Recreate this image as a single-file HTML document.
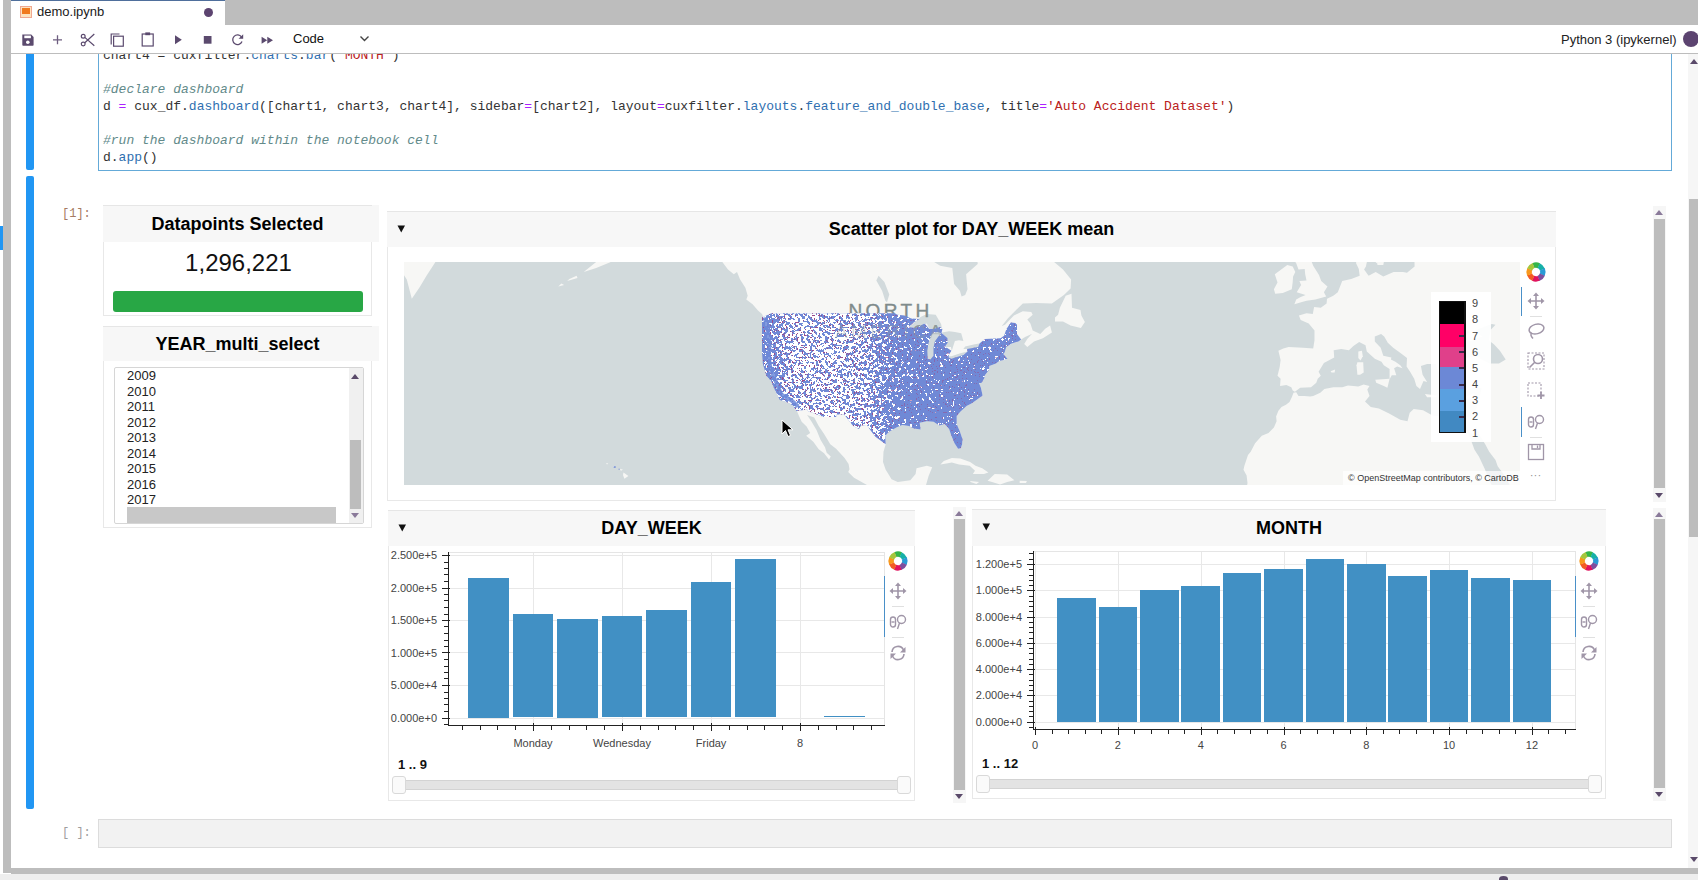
<!DOCTYPE html><html><head><meta charset="utf-8"><style>*{box-sizing:border-box;margin:0;padding:0}
html,body{width:1698px;height:880px;overflow:hidden;background:#fff;font-family:"Liberation Sans",sans-serif;color:#000}
.a{position:absolute}
.m{font-family:"Liberation Mono",monospace}
.pn{position:absolute;border:1px solid #e8e8e8;background:#fff}
.hd{position:absolute;background:#f7f7f7;box-shadow:inset 0 1px 0 #e6e6e6;font-weight:bold;font-size:18px;line-height:21px;text-align:center;color:#000;white-space:nowrap}
.t{position:absolute;white-space:pre}
.yl{position:absolute;font-size:11px;color:#444;text-align:right;width:60px;line-height:12px;white-space:nowrap}
.xl{position:absolute;font-size:11px;color:#444;text-align:center;width:80px;line-height:12px;white-space:nowrap}
.br{position:absolute;background:#4190c4}
.c{color:#628a8a;font-style:italic}
.o{color:#aa22ff}
.b{color:#2f6fb0}
.s{color:#ba2121}
</style></head><body>
<div class="a" style="left:3px;top:0px;width:8px;height:873px;background:#bdbdbd;"></div>
<div class="a" style="left:0px;top:226px;width:3px;height:24px;background:#2196f3;"></div>
<div class="a" style="left:11px;top:0px;width:1687px;height:25px;background:#bdbdbd;"></div>
<div class="a" style="left:11px;top:0px;width:214px;height:25px;background:#fff;border-top:1px solid #4f6f9c"></div>
<div class="a" style="left:20px;top:6px;width:12px;height:12px;background:#fde3c0;border:1px solid #f0a890"><div class="a" style="left:1px;top:1px;width:8px;height:6px;background:#f07a1e"></div></div>
<div class="t" style="left:37px;top:4px;font-size:13px;line-height:15px;color:#1a1a1a">demo.ipynb</div>
<div class="a" style="left:204px;top:8px;width:9px;height:9px;background:#5c4470;border-radius:50%"></div>
<div class="a" style="left:11px;top:53px;width:1687px;height:1px;background:#bdbdbd;"></div>
<svg class="a" style="left:15px;top:28px" width="270" height="24" viewBox="15 28 270 24">
<g fill="#5b4a6e">
<path d="M22.3 34.5 H31.2 L33.6 36.9 V45 Q33.6 45.8 32.8 45.8 H23.1 Q22.3 45.8 22.3 45 Z"/>
</g>
<rect x="24.3" y="35.6" width="6.6" height="2.6" fill="#fff"/>
<circle cx="27.8" cy="42.3" r="1.8" fill="#fff"/>
<path d="M53 39.8 H62 M57.5 35.3 V44.3" stroke="#6e5e80" stroke-width="1.3" fill="none"/>
<g fill="none" stroke="#5b4a6e" stroke-width="1.2">
<circle cx="83.2" cy="36.2" r="1.9"/><circle cx="83.2" cy="44" r="1.9"/>
<path d="M84.8 37.4 L94.3 45.8 M84.8 42.8 L94.3 34"/>
</g>
<g fill="none" stroke="#5b4a6e" stroke-width="1.2">
<path d="M111.2 44.5 V34 H119.5"/>
<rect x="113.6" y="36.2" width="9.7" height="10"/>
</g>
<g fill="none" stroke="#5b4a6e" stroke-width="1.2">
<rect x="142.2" y="34" width="11" height="12"/>
</g>
<rect x="145.3" y="32.4" width="4.8" height="2.8" fill="#5b4a6e"/>
<path d="M175 35.3 L181.8 39.8 L175 44.3Z" fill="#5b4a6e"/>
<rect x="203.8" y="36" width="7.7" height="7.7" fill="#5b4a6e"/>
<path d="M241.5 37 A4.8 4.8 0 1 0 242 41.5" fill="none" stroke="#5b4a6e" stroke-width="1.3"/>
<path d="M243.2 34.2 V38.8 H238.6Z" fill="#5b4a6e"/>
<path d="M261.6 36.7 L267.2 40.2 L261.6 43.7Z M267.3 36.7 L273 40.2 L267.3 43.7Z" fill="#5b4a6e"/>
</svg>

<div class="t" style="left:293px;top:31px;font-size:13px;line-height:15px;color:#111">Code</div>
<svg class="a" style="left:359px;top:35px" width="11" height="8"><path d="M1.5 1.5 L5.5 5.5 L9.5 1.5" fill="none" stroke="#444" stroke-width="1.4"/></svg>
<div class="t" style="left:1561px;top:32px;font-size:13px;line-height:15px;color:#222">Python 3 (ipykernel)</div>
<div class="a" style="left:1683px;top:31px;width:16px;height:16px;background:#5c4470;border-radius:50%"></div>
<div class="a" style="left:1688px;top:54px;width:10px;height:814px;background:#f6f6f6;"></div>
<div class="a" style="left:1689px;top:199px;width:9px;height:338px;background:#bdbdbd;"></div>
<div class="a" style="left:1690px;top:59px;border-left:4px solid transparent;border-right:4px solid transparent;border-bottom:5px solid #5a4a6a"></div>
<div class="a" style="left:1690px;top:857px;border-left:4px solid transparent;border-right:4px solid transparent;border-top:5px solid #5a4a6a"></div>
<div class="a" style="left:11px;top:868px;width:1687px;height:6px;background:#bdbdbd;"></div>
<div class="a" style="left:0px;top:874px;width:1698px;height:6px;background:#eeeeee;"></div>
<div class="a" style="left:1499px;top:876px;width:9px;height:6px;background:#5a4a6a;border-radius:50% 50% 0 0"></div>
<div class="a" style="left:26px;top:54px;width:8px;height:116px;background:#2196f3;border-radius:0 0 2px 2px"></div>
<div class="a" style="left:98px;top:54px;width:1574px;height:117px;border:1px solid #64aad8;border-top:none;overflow:hidden">
<div class="t m" style="left:4px;top:-7px;font-size:13px;line-height:17px;color:#333">chart4 = cuxfilter.<span class=b>charts</span>.<span class=b>bar</span>(<span class=s>'MONTH'</span>)

<span class=c>#declare dashboard</span>
d <span class=o>=</span> cux_df.<span class=b>dashboard</span>([chart1, chart3, chart4], sidebar<span class=o>=</span>[chart2], layout<span class=o>=</span>cuxfilter.<span class=b>layouts</span>.<span class=b>feature_and_double_base</span>, title<span class=o>=</span><span class=s>'Auto Accident Dataset'</span>)

<span class=c>#run the dashboard within the notebook cell</span>
d.<span class=b>app</span>()</div>
</div>
<div class="a" style="left:26px;top:176px;width:8px;height:633px;background:#2196f3;border-radius:2px"></div>
<div class="t m" style="left:62px;top:207px;font-size:12px;line-height:15px;color:#a57a62">[1]:</div>
<div class="pn" style="left:103px;top:205px;width:269px;height:111px"></div>
<div class="a" style="left:372px;top:205px;width:7px;height:37px;background:#f7f7f7;"></div>
<div class="hd" style="left:103px;top:205px;width:269px;height:37px;padding-top:9px">Datapoints Selected</div>
<div class="t" style="left:104px;top:249px;width:269px;text-align:center;font-size:24px;line-height:28px;color:#111">1,296,221</div>
<div class="a" style="left:113px;top:291px;width:250px;height:21px;background:#28a745;border-radius:3px"></div>
<div class="pn" style="left:103px;top:326px;width:269px;height:202px"></div>
<div class="a" style="left:372px;top:326px;width:7px;height:35px;background:#f7f7f7;"></div>
<div class="hd" style="left:103px;top:326px;width:269px;height:35px;padding-top:8px">YEAR_multi_select</div>
<div class="a" style="left:114px;top:367px;width:250px;height:157px;border:1px solid #d6d6d6;border-radius:2px;background:#fff;overflow:hidden">
<div class="t" style="left:12px;top:0.0px;font-size:13px;line-height:15px;color:#222">2009</div>
<div class="t" style="left:12px;top:15.6px;font-size:13px;line-height:15px;color:#222">2010</div>
<div class="t" style="left:12px;top:31.1px;font-size:13px;line-height:15px;color:#222">2011</div>
<div class="t" style="left:12px;top:46.7px;font-size:13px;line-height:15px;color:#222">2012</div>
<div class="t" style="left:12px;top:62.2px;font-size:13px;line-height:15px;color:#222">2013</div>
<div class="t" style="left:12px;top:77.8px;font-size:13px;line-height:15px;color:#222">2014</div>
<div class="t" style="left:12px;top:93.3px;font-size:13px;line-height:15px;color:#222">2015</div>
<div class="t" style="left:12px;top:108.9px;font-size:13px;line-height:15px;color:#222">2016</div>
<div class="t" style="left:12px;top:124.4px;font-size:13px;line-height:15px;color:#222">2017</div>
<div class="a" style="left:12px;top:139px;width:209px;height:17px;background:#c8c8c8;"></div>
<div class="a" style="left:234px;top:0px;width:14px;height:157px;background:#f0f0f0;"></div>
<div class="a" style="left:235px;top:72px;width:11px;height:69px;background:#bdbdbd;"></div>
<div class="a" style="left:236px;top:6px;border-left:4px solid transparent;border-right:4px solid transparent;border-bottom:5px solid #5a4a6a"></div>
<div class="a" style="left:236px;top:145px;border-left:4px solid transparent;border-right:4px solid transparent;border-top:5px solid #8a7a9a"></div>
</div>
<div class="pn" style="left:387px;top:211px;width:1169px;height:290px"></div>
<div class="hd" style="left:387px;top:211px;width:1169px;height:36px;padding-top:8px">Scatter plot for DAY_WEEK mean</div>
<svg class="a" style="left:397px;top:225px" width="9" height="8"><path d="M0.5 0.5 H8 L4.25 7.5Z" fill="#111"/></svg>
<div class="a" style="left:404px;top:262px;width:1116px;height:223px;overflow:hidden;background:#d2dadc">
<svg width="1116" height="223" style="position:absolute;left:0;top:0">
<defs><clipPath id="usc"><path d="M358.0 55.4 L367.4 51.3 L490.9 51.3 L493.3 52.7 L500.5 53.4 L507.2 56.4 L515.7 57.1 L510.3 60.1 L504.5 65.0 L511.6 66.0 L520.6 61.4 L525.0 66.7 L529.5 67.0 L536.2 65.0 L538.4 67.0 L537.5 70.9 L543.4 76.0 L543.8 80.8 L541.1 84.5 L547.4 88.8 L544.7 93.1 L544.7 95.5 L547.4 96.7 L559.4 93.1 L563.5 89.5 L563.0 87.0 L574.2 85.1 L575.5 81.4 L580.9 77.0 L596.5 76.3 L600.1 73.8 L602.3 67.3 L606.8 60.4 L611.3 61.1 L613.0 62.7 L613.0 71.9 L617.1 77.6 L614.4 79.5 L607.7 81.4 L602.3 85.1 L600.5 90.7 L599.2 91.9 L601.0 93.7 L603.4 96.7 L600.1 98.0 L595.2 99.1 L592.0 101.5 L585.3 103.9 L584.9 108.0 L580.9 113.3 L580.4 116.1 L577.7 120.7 L575.1 121.3 L576.9 125.8 L578.6 133.5 L574.2 136.8 L567.9 141.2 L562.6 143.9 L556.3 149.8 L552.7 154.0 L552.7 161.9 L555.9 169.6 L558.5 177.2 L558.1 182.2 L556.8 186.2 L554.1 186.7 L550.5 181.2 L546.9 172.6 L545.1 167.0 L540.7 161.9 L535.3 163.4 L529.5 159.8 L522.8 159.3 L515.7 160.8 L516.6 167.5 L509.8 166.5 L504.9 163.9 L498.2 162.9 L492.4 165.5 L484.8 170.1 L481.3 173.7 L481.7 182.2 L471.4 174.7 L467.0 169.1 L462.9 162.9 L457.1 163.4 L454.9 167.0 L449.1 163.9 L440.2 152.4 L432.6 152.5 L432.6 154.9 L419.6 154.9 L403.1 148.7 L403.5 147.5 L392.4 149.0 L388.8 143.4 L386.1 141.7 L382.5 140.1 L375.8 137.9 L370.5 126.9 L367.4 119.6 L362.4 113.8 L360.7 108.0 L358.9 102.1 L358.0 90.1 L358.0 79.5 L358.0 66.7Z"/></clipPath><linearGradient id="spg" gradientUnits="userSpaceOnUse" x1="358.9" x2="616.6" y1="0" y2="0"><stop offset="0" stop-color="#fff" stop-opacity="0.30"/><stop offset="0.05" stop-color="#fff" stop-opacity="0.45"/><stop offset="0.12" stop-color="#fff" stop-opacity="0.64"/><stop offset="0.30" stop-color="#fff" stop-opacity="0.64"/><stop offset="0.40" stop-color="#fff" stop-opacity="0.58"/><stop offset="0.47" stop-color="#fff" stop-opacity="0.40"/><stop offset="0.54" stop-color="#fff" stop-opacity="0.22"/><stop offset="0.75" stop-color="#fff" stop-opacity="0.12"/><stop offset="1" stop-color="#fff" stop-opacity="0.16"/></linearGradient><filter id="spk" filterUnits="userSpaceOnUse" x="0" y="0" width="1116" height="223" color-interpolation-filters="sRGB"><feTurbulence type="fractalNoise" baseFrequency="0.33" numOctaves="3" seed="7" result="n"/><feColorMatrix in="n" type="matrix" values="0 0 0 0 1  0 0 0 0 1  0 0 0 0 1  2.2 0 0 0 -0.6" result="na"/><feComposite in="na" in2="SourceGraphic" operator="arithmetic" k1="0" k2="1" k3="1" k4="-0.55" result="sum"/><feComponentTransfer in="sum"><feFuncA type="discrete" tableValues="0 1"/></feComponentTransfer></filter><linearGradient id="pmg" gradientUnits="userSpaceOnUse" x1="358.9" x2="616.6" y1="0" y2="0"><stop offset="0" stop-color="#fff"/><stop offset="0.4" stop-color="#fff"/><stop offset="0.55" stop-color="#888"/><stop offset="1" stop-color="#777"/></linearGradient><mask id="pmask" maskUnits="userSpaceOnUse" x="0" y="0" width="1116" height="223"><rect x="0" y="0" width="1116" height="223" fill="url(#pmg)"/></mask><filter id="spk2" filterUnits="userSpaceOnUse" x="0" y="0" width="1116" height="223" color-interpolation-filters="sRGB"><feTurbulence type="fractalNoise" baseFrequency="0.6" numOctaves="2" seed="3" result="n"/><feColorMatrix in="n" type="matrix" values="0 0 0 0 0.6  0 0 0 0 0.3  0 0 0 0 0.55  2 0 0 0 -0.68" result="na"/><feComponentTransfer in="na"><feFuncA type="discrete" tableValues="0 0 1"/></feComponentTransfer></filter></defs>
<path d="M156.5 -54.4 L178.8 -35.8 L214.6 -23.5 L205.6 -15.0 L194.5 -1.9 L179.7 10.0 L192.2 6.1 L205.6 0.6 L219.0 -6.7 L228.0 -13.3 L236.9 -23.5 L245.9 -40.3 L290.5 -35.8 L308.4 -20.1 L315.1 -10.0 L318.2 -0.2 L324.0 7.6 L329.8 12.3 L333.0 10.0 L336.1 17.6 L341.4 25.8 L343.7 33.8 L342.3 37.4 L348.6 42.3 L354.0 48.6 L358.0 52.0 L358.9 54.1 L361.5 66.7 L362.0 79.5 L359.8 90.1 L361.1 100.9 L360.2 105.1 L363.3 112.7 L368.7 119.6 L371.4 126.3 L377.2 137.4 L383.4 139.6 L387.0 141.2 L389.2 142.8 L392.8 148.7 L395.0 154.0 L397.7 159.8 L402.6 164.4 L406.2 171.1 L402.2 173.7 L409.3 179.7 L414.7 187.2 L420.1 191.2 L425.0 197.5 L426.8 194.6 L422.7 190.7 L421.0 185.2 L416.5 177.7 L412.5 168.0 L407.6 159.8 L403.1 153.0 L410.2 155.6 L414.7 163.9 L420.1 172.1 L426.3 182.2 L432.1 186.7 L440.6 196.1 L444.6 201.9 L445.5 207.2 L444.2 210.1 L450.0 215.8 L459.4 221.0 L469.6 226.7 L484.8 232.3 L500.5 232.8 L513.9 244.4 L536.2 253.6 L549.6 267.2 L647.9 267.2 L543.4 253.6 L542.9 235.1 L531.7 230.9 L521.9 231.4 L521.9 223.4 L524.6 213.9 L528.2 205.3 L522.8 203.8 L512.5 206.3 L511.6 212.0 L506.3 218.2 L493.8 220.1 L487.5 217.3 L485.3 213.4 L481.7 207.7 L479.0 200.0 L479.5 189.7 L481.7 182.2 L481.3 173.7 L484.8 170.1 L492.4 165.5 L498.2 162.9 L504.9 163.9 L509.8 166.5 L516.6 167.5 L515.7 160.8 L522.8 159.3 L529.5 159.8 L535.3 163.4 L540.7 161.9 L545.1 167.0 L546.9 172.6 L550.5 181.2 L554.1 186.7 L556.8 186.2 L558.1 182.2 L558.5 177.2 L555.9 169.6 L552.7 161.9 L552.7 154.0 L556.3 149.8 L562.6 143.9 L567.9 141.2 L574.2 136.8 L578.6 133.5 L576.9 125.8 L575.1 121.3 L577.7 120.7 L580.4 116.1 L580.9 113.3 L584.9 108.0 L585.3 103.9 L592.0 101.5 L595.2 99.1 L600.1 98.0 L603.4 96.7 L601.0 93.7 L599.2 91.9 L600.5 90.7 L602.3 85.1 L607.7 81.4 L614.4 79.5 L617.1 77.6 L621.1 75.1 L627.8 71.9 L623.3 77.0 L620.2 82.0 L623.3 85.1 L630.0 79.5 L638.9 76.3 L647.9 70.6 L646.1 63.4 L641.2 66.7 L636.3 71.9 L628.7 68.6 L626.4 61.4 L623.3 57.4 L628.7 52.7 L627.3 50.0 L618.8 49.3 L609.9 53.4 L601.0 62.7 L597.8 64.1 L604.1 56.1 L612.1 47.9 L618.8 41.6 L632.2 40.9 L647.9 41.6 L659.9 33.1 L666.6 26.6 L667.1 17.6 L659.0 7.6 L647.9 -1.9 L638.9 -18.4 L630.0 -40.3 L571.9 -40.3 L569.7 -22.6 L572.8 -10.0 L573.7 2.1 L562.1 12.3 L563.5 27.3 L561.2 33.1 L557.6 34.6 L555.9 28.8 L550.1 22.1 L548.3 6.1 L536.2 3.7 L520.6 -5.9 L502.7 -12.5 L493.8 -27.0 L491.5 -44.9 L156.5 -54.4Z" fill="#f7f7f5"/>
<path d="M651.0 59.4 L659.0 59.4 L666.6 63.4 L676.9 66.0 L680.9 60.1 L677.4 53.4 L676.5 47.9 L668.0 45.8 L667.5 31.7 L661.7 33.8 L655.9 45.8 L654.1 52.7 L651.0 55.4Z" fill="#f7f7f5"/>
<path d="M536.4 202.4 L539.8 199.0 L547.8 196.1 L556.3 196.6 L566.1 200.0 L571.5 203.8 L578.2 206.3 L584.4 210.6 L580.0 212.0 L568.8 212.0 L571.0 208.7 L565.7 203.8 L555.0 202.4 L547.8 200.4 L542.5 201.4Z" fill="#f7f7f5"/>
<path d="M583.6 218.7 L590.7 212.0 L603.2 212.5 L610.4 218.2 L603.2 220.1 L596.1 222.5 L588.0 220.1Z" fill="#f7f7f5"/>
<path d="M566.1 218.9 L575.1 220.1 L572.4 222.0 L566.6 220.1Z" fill="#f7f7f5"/>
<path d="M615.7 218.7 L622.9 219.1 L622.0 221.0 L615.7 221.0Z" fill="#f7f7f5"/>
<path d="M219.5 210.6 L224.4 213.9 L220.4 216.8 L219.0 213.0Z" fill="#f7f7f5"/>
<path d="M215.9 206.7 L219.0 207.7 L216.8 208.7Z" fill="#f7f7f5"/>
<path d="M208.8 203.8 L211.5 205.3 L209.7 205.3Z" fill="#f7f7f5"/>
<path d="M202.1 200.9 L204.3 201.4 L203.0 202.4Z" fill="#f7f7f5"/>
<path d="M-66.8 -54.4 L-22.2 -54.4 L-13.2 -10.0 L-2.1 10.0 L2.8 17.6 L7.8 36.7 L15.8 25.1 L22.5 13.8 L33.7 -3.5 L35.9 -18.4 L44.8 -54.4Z" fill="#f7f7f5"/>
<path d="M890.4 42.3 L897.1 40.2 L902.5 38.8 L911.4 37.4 L922.2 34.6 L919.9 30.2 L923.5 24.4 L917.2 19.1 L915.0 13.1 L909.2 3.7 L907.0 -1.9 L902.5 -5.1 L907.9 -14.1 L901.2 -23.5 L893.6 -23.5 L890.0 -14.1 L888.2 -4.3 L892.2 1.3 L894.5 7.6 L900.7 6.9 L901.2 12.3 L902.5 18.4 L895.4 19.1 L897.1 22.9 L892.7 30.2 L901.6 33.1 L896.2 35.3 L892.2 37.4Z" fill="#f7f7f5"/>
<path d="M888.7 4.5 L891.3 10.0 L889.1 14.6 L888.7 19.9 L887.8 27.3 L878.8 30.9 L871.2 31.7 L869.9 27.3 L873.5 20.6 L870.8 12.3 L877.9 6.9 L883.3 2.9Z" fill="#f7f7f5"/>
<path d="M963.3 -15.8 L952.5 -8.3 L952.1 1.3 L954.8 6.9 L955.7 13.8 L947.2 16.9 L938.2 19.1 L933.8 30.2 L929.3 33.8 L923.0 36.7 L922.6 41.6 L916.8 45.8 L910.1 45.1 L908.8 52.0 L902.5 51.3 L894.9 53.4 L896.7 58.1 L904.7 61.4 L910.5 68.6 L910.5 78.2 L909.2 86.4 L898.9 85.8 L884.6 85.1 L879.3 86.4 L874.4 88.8 L876.6 98.0 L875.7 105.1 L873.5 113.8 L876.6 116.7 L876.1 123.0 L876.1 124.1 L882.4 123.0 L887.3 125.2 L888.7 128.6 L890.9 129.7 L896.2 125.8 L907.0 125.2 L912.3 120.7 L913.7 116.7 L916.8 113.8 L914.6 109.8 L919.9 100.9 L930.2 95.5 L929.7 88.2 L937.3 87.0 L944.9 88.2 L949.4 83.9 L955.2 80.1 L961.5 83.3 L962.8 89.5 L970.8 96.7 L977.5 99.7 L979.8 103.3 L985.6 106.9 L985.6 117.3 L987.8 113.3 L992.3 113.3 L990.1 106.3 L993.2 104.5 L998.5 106.3 L996.3 103.3 L991.4 99.7 L986.9 97.4 L987.4 95.5 L979.3 93.7 L976.7 85.8 L970.8 79.5 L970.8 74.4 L977.1 71.9 L980.2 74.4 L983.8 80.8 L989.2 85.8 L996.8 91.3 L1003.0 96.1 L1002.6 104.5 L1006.1 109.8 L1010.2 116.7 L1012.4 124.1 L1016.0 126.9 L1019.5 119.0 L1023.1 120.1 L1018.6 112.7 L1016.9 103.9 L1023.1 102.1 L1032.0 102.1 L1032.9 106.9 L1035.2 110.9 L1036.5 116.1 L1037.8 124.1 L1042.8 125.8 L1048.6 128.6 L1052.6 124.6 L1061.1 129.1 L1070.5 125.2 L1077.6 126.3 L1075.8 133.0 L1074.9 139.6 L1072.2 147.1 L1069.6 154.0 L1060.2 155.1 L1049.5 155.6 L1037.8 154.5 L1028.5 153.5 L1019.1 148.2 L1009.7 147.1 L1005.7 150.8 L1003.5 159.3 L996.3 157.7 L985.1 151.4 L974.9 146.6 L966.8 145.0 L961.0 139.6 L965.5 134.1 L963.3 127.4 L965.5 124.1 L961.5 123.0 L959.7 122.4 L954.3 124.6 L944.0 123.5 L938.2 125.2 L929.3 125.2 L920.4 126.9 L916.3 130.8 L909.2 134.1 L906.1 134.6 L900.3 134.1 L894.5 134.1 L892.2 130.2 L889.5 130.8 L887.8 135.2 L885.5 140.1 L882.0 142.8 L877.5 145.0 L874.4 148.7 L872.1 154.5 L872.6 159.3 L869.9 165.5 L864.5 171.1 L857.8 173.7 L851.1 181.2 L846.7 189.7 L844.0 193.1 L840.4 203.8 L839.5 207.7 L842.6 213.4 L843.5 221.0 L842.2 229.0 L837.7 236.5 L840.0 258.1 L1183.9 258.1 L1183.9 -54.4 L960.6 -54.4 L965.0 -18.4 L971.7 -1.9 L971.7 2.1 L965.0 -5.9 L963.3 -15.8Z" fill="#f7f7f5"/>
<path d="M953.4 100.3 L959.2 100.3 L959.7 110.4 L956.1 112.7 L953.4 112.7 L952.5 103.3Z" fill="#f7f7f5"/>
<path d="M954.3 89.5 L957.9 88.8 L958.8 94.3 L956.5 98.6 L954.3 96.1Z" fill="#f7f7f5"/>
<path d="M971.3 117.8 L985.6 116.7 L983.4 125.8 L979.8 124.1 L972.2 120.7Z" fill="#f7f7f5"/>
<path d="M1020.9 131.9 L1033.4 133.5 L1032.0 135.2 L1023.1 135.2Z" fill="#f7f7f5"/>
<path d="M1060.2 135.2 L1065.5 133.0 L1070.5 131.3 L1067.3 136.8 L1061.5 136.8Z" fill="#f7f7f5"/>
<path d="M926.6 109.2 L931.1 107.4 L930.6 110.4 L927.5 110.4Z" fill="#f7f7f5"/>
<path d="M163.2 19.1 L173.5 16.1 L172.6 13.8 L165.4 16.9Z" fill="#f7f7f5"/>
<path d="M154.3 24.4 L160.1 22.9 L157.4 21.4Z" fill="#f7f7f5"/>
<path d="M1053.0 66.7 L1057.5 66.0 L1065.5 69.9 L1061.1 74.4 L1066.0 79.5 L1074.5 75.7 L1078.9 74.4 L1073.1 71.2 L1072.2 68.0 L1087.9 62.1 L1091.5 62.7 L1086.5 68.0 L1084.8 78.2 L1090.1 82.6 L1095.9 88.8 L1101.7 97.4 L1095.0 101.5 L1085.6 101.5 L1076.7 96.7 L1072.2 94.3 L1063.3 95.5 L1055.7 100.3 L1045.9 99.7 L1041.0 94.9 L1039.2 91.3 L1041.0 86.4 L1043.7 80.8 L1048.6 74.4Z" fill="#d2dadc"/>
<path d="M1061.1 161.9 L1061.5 165.0 L1065.1 173.1 L1070.5 187.7 L1074.9 194.6 L1080.7 206.7 L1086.5 221.0 L1094.6 235.1 L1109.3 246.7 L1109.3 237.4 L1108.0 228.1 L1103.5 218.7 L1099.0 211.5 L1093.7 204.3 L1091.5 198.0 L1085.2 189.7 L1081.2 182.2 L1074.9 172.1 L1072.2 164.4 L1068.7 172.1 L1065.5 171.1 L1062.4 164.4Z" fill="#d2dadc"/>
<path d="M960.1 7.6 L964.6 13.8 L971.7 10.0 L979.3 14.6 L989.6 10.0 L999.0 10.0 L1003.0 10.8 L1010.6 4.5 L1010.2 -10.0 L1014.2 -54.4 L965.0 -54.4 L973.1 1.3 L967.3 -1.9 L963.3 -1.9 L961.9 4.5Z" fill="#d2dadc"/>
<path d="M504.5 65.4 L511.6 66.0 L522.8 61.4 L525.0 66.0 L529.5 67.3 L538.0 66.7 L537.1 62.1 L531.7 52.7 L522.8 52.0 L517.0 54.7 L509.4 61.4Z" fill="#d2dadc"/>
<path d="M538.0 70.6 L545.1 69.3 L550.9 69.9 L557.2 71.2 L559.4 78.9 L555.0 78.2 L550.9 78.9 L547.8 88.8 L546.9 85.1 L541.1 85.1 L543.8 80.8 L542.9 75.7 L538.9 72.5Z" fill="#d2dadc"/>
<path d="M542.9 96.7 L550.9 98.0 L557.6 94.3 L563.5 89.5 L556.3 91.3 L547.4 94.3 L544.2 94.3Z" fill="#d2dadc"/>
<path d="M559.4 87.0 L565.2 87.0 L575.1 85.8 L575.1 81.4 L569.7 82.6 L561.2 84.5Z" fill="#d2dadc"/>
<path d="M483.0 40.2 L485.3 32.4 L480.4 19.9 L474.6 13.8 L472.3 18.4 L478.1 28.8 L481.3 38.8Z" fill="#d2dadc"/>
<path d="M972.2 -3.5 L973.5 2.9 L979.3 2.9 L980.2 -1.9 L987.4 -4.3 L991.8 -35.8 L965.0 -35.8Z" fill="#f7f7f5"/>
<text x="444.4" y="55.3" font-family="Liberation Sans" font-size="19" letter-spacing="3.4" fill="#7f8b8b" stroke="#7f8b8b" stroke-width="0.4">NORTH</text>
<text x="431" y="76.3" font-family="Liberation Sans" font-size="19" letter-spacing="3.4" fill="#8f9a9a">AMERICA</text>
<g clip-path="url(#usc)">
<rect x="356.9" y="40" width="267.7" height="150" fill="#7089d6"/>
<rect x="356.9" y="40" width="267.7" height="150" fill="url(#spg)" filter="url(#spk)"/>
<rect x="356.9" y="40" width="267.7" height="150" fill="#000" filter="url(#spk2)" mask="url(#pmask)"/>
<path d="M360.7 55.4 L363.8 69.9 L365.6 82.6 L364.7 94.9 L366.5 106.9 L371.8 119.6 L377.2 132.4 L387.5 138.5 L394.2 144.4" fill="none" stroke="#6b88d8" stroke-width="4" opacity="0.85"/>
</g>
<path d="M523.7 96.7 L523.3 88.8 L524.6 80.8 L527.3 73.2 L529.5 70.6 L534.0 69.9 L537.1 71.2 L534.0 75.1 L530.8 79.5 L529.5 85.8 L529.5 93.7 L526.4 97.4Z" fill="#d2dadc"/>
<rect x="209.7" y="204.3" width="2" height="1.5" fill="#6f89d6"/><rect x="214.6" y="206.7" width="1" height="1" fill="#6f89d6"/>
<text x="431" y="76.3" font-family="Liberation Sans" font-size="19" letter-spacing="3.4" fill="#8f9a9a" opacity="0.35">AMERICA</text>
</svg>
<svg class="a" style="left:377px;top:157px" width="14" height="20" viewBox="0 0 14 20"><path d="M1 1 L1 15 L4.5 11.5 L7 17.5 L9.5 16.5 L7 10.8 L12 10.8Z" fill="#000" stroke="#fff" stroke-width="1"/></svg>
</div>
<div class="a" style="left:1431px;top:292px;width:60px;height:150px;background:rgba(255,255,255,0.93)"></div>
<div class="a" style="left:1439px;top:301px;width:27px;height:132px;border:1.5px solid #111;background:#111;overflow:hidden">
<div class="a" style="left:0;top:0px;width:24px;height:22px;background:#000000"></div>
<div class="a" style="left:0;top:22px;width:24px;height:23px;background:#ff0066"></div>
<div class="a" style="left:0;top:45px;width:24px;height:20px;background:#e0408a"></div>
<div class="a" style="left:0;top:65px;width:24px;height:22px;background:#6c88d6"></div>
<div class="a" style="left:0;top:87px;width:24px;height:22px;background:#5aa0e0"></div>
<div class="a" style="left:0;top:109px;width:24px;height:23px;background:#4189c2"></div>
<div class="a" style="left:19px;top:33px;width:5px;height:1.5px;background:#3a2a4a"></div>
<div class="a" style="left:19px;top:49px;width:5px;height:1.5px;background:#3a2a4a"></div>
<div class="a" style="left:19px;top:65px;width:5px;height:1.5px;background:#3a2a4a"></div>
<div class="a" style="left:19px;top:82px;width:5px;height:1.5px;background:#3a2a4a"></div>
<div class="a" style="left:19px;top:98px;width:5px;height:1.5px;background:#3a2a4a"></div>
<div class="a" style="left:19px;top:114px;width:5px;height:1.5px;background:#3a2a4a"></div>
</div>
<div class="t" style="left:1472px;top:296.2px;font-size:11px;line-height:14px;color:#444">9</div>
<div class="t" style="left:1472px;top:312.4px;font-size:11px;line-height:14px;color:#444">8</div>
<div class="t" style="left:1472px;top:328.5px;font-size:11px;line-height:14px;color:#444">7</div>
<div class="t" style="left:1472px;top:344.7px;font-size:11px;line-height:14px;color:#444">6</div>
<div class="t" style="left:1472px;top:360.9px;font-size:11px;line-height:14px;color:#444">5</div>
<div class="t" style="left:1472px;top:377.0px;font-size:11px;line-height:14px;color:#444">4</div>
<div class="t" style="left:1472px;top:393.2px;font-size:11px;line-height:14px;color:#444">3</div>
<div class="t" style="left:1472px;top:409.3px;font-size:11px;line-height:14px;color:#444">2</div>
<div class="t" style="left:1472px;top:425.5px;font-size:11px;line-height:14px;color:#444">1</div>
<div class="a" style="left:1343px;top:471px;width:177px;height:14px;background:rgba(255,255,255,0.7)"></div>
<div class="t" style="left:1348px;top:472px;font-size:9px;line-height:12px;color:#333">© OpenStreetMap contributors, © CartoDB</div>
<svg class="a" style="left:1525px;top:260.5px" width="22" height="22" viewBox="-11 -11 22 22"><path d="M-3.67 -8.87 A9.6 9.6 0 0 1 4.02 -8.72 L1.76 -3.81 A4.2 4.2 0 0 0 -1.61 -3.88Z" fill="#36b54a"/><path d="M3.67 -8.87 A9.6 9.6 0 0 1 9.01 -3.32 L3.94 -1.45 A4.2 4.2 0 0 0 1.61 -3.88Z" fill="#16b0a8"/><path d="M8.87 -3.67 A9.6 9.6 0 0 1 8.72 4.02 L3.81 1.76 A4.2 4.2 0 0 0 3.88 -1.61Z" fill="#2a9ad6"/><path d="M8.87 3.67 A9.6 9.6 0 0 1 3.32 9.01 L1.45 3.94 A4.2 4.2 0 0 0 3.88 1.61Z" fill="#7d4f9e"/><path d="M3.67 8.87 A9.6 9.6 0 0 1 -4.02 8.72 L-1.76 3.81 A4.2 4.2 0 0 0 1.61 3.88Z" fill="#e0135e"/><path d="M-3.67 8.87 A9.6 9.6 0 0 1 -9.01 3.32 L-3.94 1.45 A4.2 4.2 0 0 0 -1.61 3.88Z" fill="#f25b24"/><path d="M-8.87 3.67 A9.6 9.6 0 0 1 -8.72 -4.02 L-3.81 -1.76 A4.2 4.2 0 0 0 -3.88 1.61Z" fill="#f7981d"/><path d="M-8.87 -3.67 A9.6 9.6 0 0 1 -3.32 -9.01 L-1.45 -3.94 A4.2 4.2 0 0 0 -3.88 -1.61Z" fill="#a6c63c"/></svg><svg class="a" style="left:1527px;top:292px" width="18" height="18" viewBox="0 0 18 18"><g fill="none" stroke="#a096a8" stroke-width="1.6"><path d="M9 2V16M2 9H16"/></g><g fill="#a096a8"><path d="M9 0.5L12 4H6Z"/><path d="M9 17.5L12 14H6Z"/><path d="M0.5 9L4 6V12Z"/><path d="M17.5 9L14 6V12Z"/></g></svg><svg class="a" style="left:1527px;top:322px" width="18" height="18" viewBox="0 0 18 18"><g fill="none" stroke="#a096a8" stroke-width="1.5"><ellipse cx="9.5" cy="7" rx="7.5" ry="4.8" transform="rotate(-15 9.5 7)"/><path d="M5 11C3 12 4 14.5 6 16.5"/></g></svg><svg class="a" style="left:1527px;top:352px" width="18" height="18" viewBox="0 0 18 18"><g fill="none" stroke="#a096a8" stroke-width="1.1" stroke-dasharray="2 1.5"><rect x="1" y="1" width="16" height="16"/></g><g fill="none" stroke="#a096a8" stroke-width="1.6"><circle cx="11" cy="7" r="4.5"/><path d="M8 10L2.5 15.5"/></g></svg><svg class="a" style="left:1527px;top:382px" width="18" height="18" viewBox="0 0 18 18"><g fill="none" stroke="#a096a8" stroke-width="1.1" stroke-dasharray="2 1.5"><rect x="1" y="1" width="13" height="13"/></g><g fill="none" stroke="#a096a8" stroke-width="1.8"><path d="M14 10V17M10.5 13.5H17.5"/></g></svg><svg class="a" style="left:1527px;top:413px" width="18" height="18" viewBox="0 0 18 18"><g fill="none" stroke="#a096a8" stroke-width="1.4"><rect x="1.5" y="4" width="5" height="10" rx="2.5"/><path d="M2.5 9H5.5"/><circle cx="12.5" cy="6.5" r="4"/><path d="M10.5 10L8.5 16"/></g></svg><svg class="a" style="left:1527px;top:443px" width="18" height="18" viewBox="0 0 18 18"><g fill="none" stroke="#a096a8" stroke-width="1.3"><rect x="1.5" y="1.5" width="15" height="15"/><path d="M5 1.5V6H13V1.5M10.5 2.5V5"/></g></svg><div class="a" style="left:1521px;top:287px;width:1px;height:29px;background:#4a90c8"></div><div class="a" style="left:1521px;top:407px;width:1px;height:30px;background:#4a90c8"></div><div class="a" style="left:1530px;top:316px;width:12px;height:1px;background:#e0e0e0"></div><div class="a" style="left:1530px;top:437px;width:12px;height:1px;background:#e0e0e0"></div>
<div class="t" style="left:1530px;top:470px;font-size:10px;line-height:12px;color:#888;letter-spacing:0.5px">···</div>
<div class="pn" style="left:388px;top:510px;width:527px;height:291px"></div>
<div class="hd" style="left:388px;top:510px;width:527px;height:36px;padding-top:8px">DAY_WEEK</div>
<svg class="a" style="left:398px;top:524px" width="9" height="8"><path d="M0.5 0.5 H8 L4.25 7.5Z" fill="#111"/></svg>
<div class="a" style="left:448px;top:552px;width:437px;height:173px;border:1px solid #e5e5e5;border-left:none;border-bottom:none"></div>
<div class="a" style="left:449px;top:718px;width:435px;height:1px;background:#e8e8e8;"></div>
<div class="a" style="left:449px;top:685px;width:435px;height:1px;background:#e8e8e8;"></div>
<div class="a" style="left:449px;top:652px;width:435px;height:1px;background:#e8e8e8;"></div>
<div class="a" style="left:449px;top:620px;width:435px;height:1px;background:#e8e8e8;"></div>
<div class="a" style="left:449px;top:588px;width:435px;height:1px;background:#e8e8e8;"></div>
<div class="a" style="left:449px;top:555px;width:435px;height:1px;background:#e8e8e8;"></div>
<div class="a" style="left:533px;top:553px;width:1px;height:172px;background:#e8e8e8;"></div>
<div class="a" style="left:622px;top:553px;width:1px;height:172px;background:#e8e8e8;"></div>
<div class="a" style="left:711px;top:553px;width:1px;height:172px;background:#e8e8e8;"></div>
<div class="a" style="left:800px;top:553px;width:1px;height:172px;background:#e8e8e8;"></div>
<div class="br" style="left:468.2px;top:578.0px;width:40.6px;height:139.5px"></div>
<div class="br" style="left:512.7px;top:613.8px;width:40.6px;height:103.7px"></div>
<div class="br" style="left:557.2px;top:619.0px;width:40.6px;height:98.5px"></div>
<div class="br" style="left:601.7px;top:615.6px;width:40.6px;height:101.9px"></div>
<div class="br" style="left:646.2px;top:610.2px;width:40.6px;height:107.3px"></div>
<div class="br" style="left:690.8px;top:582.3px;width:40.6px;height:135.2px"></div>
<div class="br" style="left:735.3px;top:559.4px;width:40.6px;height:158.1px"></div>
<div class="br" style="left:824.3px;top:716.3px;width:40.6px;height:1.2px"></div>
<div class="a" style="left:448px;top:552px;width:1px;height:174px;background:#222;"></div>
<div class="a" style="left:448px;top:725px;width:437px;height:1px;background:#222;"></div>
<div class="a" style="left:444px;top:724px;width:4px;height:1px;background:#222;"></div>
<div class="a" style="left:444px;top:718px;width:4px;height:1px;background:#222;"></div>
<div class="a" style="left:444px;top:711px;width:4px;height:1px;background:#222;"></div>
<div class="a" style="left:444px;top:704px;width:4px;height:1px;background:#222;"></div>
<div class="a" style="left:444px;top:698px;width:4px;height:1px;background:#222;"></div>
<div class="a" style="left:444px;top:692px;width:4px;height:1px;background:#222;"></div>
<div class="a" style="left:444px;top:685px;width:4px;height:1px;background:#222;"></div>
<div class="a" style="left:444px;top:678px;width:4px;height:1px;background:#222;"></div>
<div class="a" style="left:444px;top:672px;width:4px;height:1px;background:#222;"></div>
<div class="a" style="left:444px;top:666px;width:4px;height:1px;background:#222;"></div>
<div class="a" style="left:444px;top:659px;width:4px;height:1px;background:#222;"></div>
<div class="a" style="left:444px;top:652px;width:4px;height:1px;background:#222;"></div>
<div class="a" style="left:444px;top:646px;width:4px;height:1px;background:#222;"></div>
<div class="a" style="left:444px;top:640px;width:4px;height:1px;background:#222;"></div>
<div class="a" style="left:444px;top:633px;width:4px;height:1px;background:#222;"></div>
<div class="a" style="left:444px;top:626px;width:4px;height:1px;background:#222;"></div>
<div class="a" style="left:444px;top:620px;width:4px;height:1px;background:#222;"></div>
<div class="a" style="left:444px;top:614px;width:4px;height:1px;background:#222;"></div>
<div class="a" style="left:444px;top:607px;width:4px;height:1px;background:#222;"></div>
<div class="a" style="left:444px;top:600px;width:4px;height:1px;background:#222;"></div>
<div class="a" style="left:444px;top:594px;width:4px;height:1px;background:#222;"></div>
<div class="a" style="left:444px;top:588px;width:4px;height:1px;background:#222;"></div>
<div class="a" style="left:444px;top:581px;width:4px;height:1px;background:#222;"></div>
<div class="a" style="left:444px;top:574px;width:4px;height:1px;background:#222;"></div>
<div class="a" style="left:444px;top:568px;width:4px;height:1px;background:#222;"></div>
<div class="a" style="left:444px;top:562px;width:4px;height:1px;background:#222;"></div>
<div class="a" style="left:444px;top:555px;width:4px;height:1px;background:#222;"></div>
<div class="a" style="left:442px;top:718px;width:8px;height:1px;background:#222;"></div>
<div class="yl" style="left:377px;top:711.5px">0.000e+0</div>
<div class="a" style="left:442px;top:685px;width:8px;height:1px;background:#222;"></div>
<div class="yl" style="left:377px;top:679.0px">5.000e+4</div>
<div class="a" style="left:442px;top:652px;width:8px;height:1px;background:#222;"></div>
<div class="yl" style="left:377px;top:646.5px">1.000e+5</div>
<div class="a" style="left:442px;top:620px;width:8px;height:1px;background:#222;"></div>
<div class="yl" style="left:377px;top:614.0px">1.500e+5</div>
<div class="a" style="left:442px;top:588px;width:8px;height:1px;background:#222;"></div>
<div class="yl" style="left:377px;top:581.5px">2.000e+5</div>
<div class="a" style="left:442px;top:555px;width:8px;height:1px;background:#222;"></div>
<div class="yl" style="left:377px;top:549.0px">2.500e+5</div>
<div class="a" style="left:462px;top:726px;width:1px;height:4px;background:#222;"></div>
<div class="a" style="left:480px;top:726px;width:1px;height:4px;background:#222;"></div>
<div class="a" style="left:497px;top:726px;width:1px;height:4px;background:#222;"></div>
<div class="a" style="left:515px;top:726px;width:1px;height:4px;background:#222;"></div>
<div class="a" style="left:533px;top:726px;width:1px;height:4px;background:#222;"></div>
<div class="a" style="left:551px;top:726px;width:1px;height:4px;background:#222;"></div>
<div class="a" style="left:569px;top:726px;width:1px;height:4px;background:#222;"></div>
<div class="a" style="left:586px;top:726px;width:1px;height:4px;background:#222;"></div>
<div class="a" style="left:604px;top:726px;width:1px;height:4px;background:#222;"></div>
<div class="a" style="left:622px;top:726px;width:1px;height:4px;background:#222;"></div>
<div class="a" style="left:640px;top:726px;width:1px;height:4px;background:#222;"></div>
<div class="a" style="left:658px;top:726px;width:1px;height:4px;background:#222;"></div>
<div class="a" style="left:675px;top:726px;width:1px;height:4px;background:#222;"></div>
<div class="a" style="left:693px;top:726px;width:1px;height:4px;background:#222;"></div>
<div class="a" style="left:711px;top:726px;width:1px;height:4px;background:#222;"></div>
<div class="a" style="left:729px;top:726px;width:1px;height:4px;background:#222;"></div>
<div class="a" style="left:747px;top:726px;width:1px;height:4px;background:#222;"></div>
<div class="a" style="left:764px;top:726px;width:1px;height:4px;background:#222;"></div>
<div class="a" style="left:782px;top:726px;width:1px;height:4px;background:#222;"></div>
<div class="a" style="left:800px;top:726px;width:1px;height:4px;background:#222;"></div>
<div class="a" style="left:818px;top:726px;width:1px;height:4px;background:#222;"></div>
<div class="a" style="left:836px;top:726px;width:1px;height:4px;background:#222;"></div>
<div class="a" style="left:853px;top:726px;width:1px;height:4px;background:#222;"></div>
<div class="a" style="left:871px;top:726px;width:1px;height:4px;background:#222;"></div>
<div class="a" style="left:533px;top:723px;width:1px;height:8px;background:#222;"></div>
<div class="xl" style="left:493.0px;top:737px">Monday</div>
<div class="a" style="left:622px;top:723px;width:1px;height:8px;background:#222;"></div>
<div class="xl" style="left:582.0px;top:737px">Wednesday</div>
<div class="a" style="left:711px;top:723px;width:1px;height:8px;background:#222;"></div>
<div class="xl" style="left:671.1px;top:737px">Friday</div>
<div class="a" style="left:800px;top:723px;width:1px;height:8px;background:#222;"></div>
<div class="xl" style="left:760.1px;top:737px">8</div>
<svg class="a" style="left:887px;top:550px" width="22" height="22" viewBox="-11 -11 22 22"><path d="M-3.67 -8.87 A9.6 9.6 0 0 1 4.02 -8.72 L1.76 -3.81 A4.2 4.2 0 0 0 -1.61 -3.88Z" fill="#36b54a"/><path d="M3.67 -8.87 A9.6 9.6 0 0 1 9.01 -3.32 L3.94 -1.45 A4.2 4.2 0 0 0 1.61 -3.88Z" fill="#16b0a8"/><path d="M8.87 -3.67 A9.6 9.6 0 0 1 8.72 4.02 L3.81 1.76 A4.2 4.2 0 0 0 3.88 -1.61Z" fill="#2a9ad6"/><path d="M8.87 3.67 A9.6 9.6 0 0 1 3.32 9.01 L1.45 3.94 A4.2 4.2 0 0 0 3.88 1.61Z" fill="#7d4f9e"/><path d="M3.67 8.87 A9.6 9.6 0 0 1 -4.02 8.72 L-1.76 3.81 A4.2 4.2 0 0 0 1.61 3.88Z" fill="#e0135e"/><path d="M-3.67 8.87 A9.6 9.6 0 0 1 -9.01 3.32 L-3.94 1.45 A4.2 4.2 0 0 0 -1.61 3.88Z" fill="#f25b24"/><path d="M-8.87 3.67 A9.6 9.6 0 0 1 -8.72 -4.02 L-3.81 -1.76 A4.2 4.2 0 0 0 -3.88 1.61Z" fill="#f7981d"/><path d="M-8.87 -3.67 A9.6 9.6 0 0 1 -3.32 -9.01 L-1.45 -3.94 A4.2 4.2 0 0 0 -3.88 -1.61Z" fill="#a6c63c"/></svg><svg class="a" style="left:889px;top:582px" width="18" height="18" viewBox="0 0 18 18"><g fill="none" stroke="#a096a8" stroke-width="1.6"><path d="M9 2V16M2 9H16"/></g><g fill="#a096a8"><path d="M9 0.5L12 4H6Z"/><path d="M9 17.5L12 14H6Z"/><path d="M0.5 9L4 6V12Z"/><path d="M17.5 9L14 6V12Z"/></g></svg><svg class="a" style="left:889px;top:613px" width="18" height="18" viewBox="0 0 18 18"><g fill="none" stroke="#a096a8" stroke-width="1.4"><rect x="1.5" y="4" width="5" height="10" rx="2.5"/><path d="M2.5 9H5.5"/><circle cx="12.5" cy="6.5" r="4"/><path d="M10.5 10L8.5 16"/></g></svg><svg class="a" style="left:889px;top:644px" width="18" height="18" viewBox="0 0 18 18"><g fill="none" stroke="#a096a8" stroke-width="1.6"><path d="M3 8A6 6 0 0 1 14.5 6"/><path d="M15 10A6 6 0 0 1 3.5 12"/></g><g fill="#a096a8"><path d="M16.5 3V8.5H11Z"/><path d="M1.5 15V9.5H7Z"/></g></svg><div class="a" style="left:884px;top:576px;width:1px;height:61px;background:#4a90c8"></div><div class="a" style="left:892px;top:606px;width:12px;height:1px;background:#e0e0e0"></div><div class="a" style="left:892px;top:637px;width:12px;height:1px;background:#e0e0e0"></div>
<div class="t" style="left:398px;top:757px;font-size:13px;font-weight:bold;line-height:15px;color:#111">1 .. 9</div>
<div class="a" style="left:398px;top:780px;width:505px;height:10px;background:#e3e3e3;border:1px solid #d3d3d3;border-radius:3px"></div>
<div class="a" style="left:392px;top:776px;width:14px;height:18px;background:#fafafa;border:1px solid #d9d9d9;border-radius:3px"></div>
<div class="a" style="left:897px;top:776px;width:14px;height:18px;background:#fafafa;border:1px solid #d9d9d9;border-radius:3px"></div>
<div class="pn" style="left:972px;top:509px;width:634px;height:290px"></div>
<div class="hd" style="left:972px;top:509px;width:634px;height:37px;padding-top:9px">MONTH</div>
<svg class="a" style="left:982px;top:523px" width="9" height="8"><path d="M0.5 0.5 H8 L4.25 7.5Z" fill="#111"/></svg>
<div class="a" style="left:1033px;top:551px;width:543px;height:178px;border:1px solid #e5e5e5;border-left:none;border-bottom:none"></div>
<div class="a" style="left:1034px;top:722px;width:541px;height:1px;background:#e8e8e8;"></div>
<div class="a" style="left:1034px;top:695px;width:541px;height:1px;background:#e8e8e8;"></div>
<div class="a" style="left:1034px;top:669px;width:541px;height:1px;background:#e8e8e8;"></div>
<div class="a" style="left:1034px;top:643px;width:541px;height:1px;background:#e8e8e8;"></div>
<div class="a" style="left:1034px;top:617px;width:541px;height:1px;background:#e8e8e8;"></div>
<div class="a" style="left:1034px;top:590px;width:541px;height:1px;background:#e8e8e8;"></div>
<div class="a" style="left:1034px;top:564px;width:541px;height:1px;background:#e8e8e8;"></div>
<div class="a" style="left:1035px;top:552px;width:1px;height:177px;background:#e8e8e8;"></div>
<div class="a" style="left:1118px;top:552px;width:1px;height:177px;background:#e8e8e8;"></div>
<div class="a" style="left:1201px;top:552px;width:1px;height:177px;background:#e8e8e8;"></div>
<div class="a" style="left:1284px;top:552px;width:1px;height:177px;background:#e8e8e8;"></div>
<div class="a" style="left:1366px;top:552px;width:1px;height:177px;background:#e8e8e8;"></div>
<div class="a" style="left:1449px;top:552px;width:1px;height:177px;background:#e8e8e8;"></div>
<div class="a" style="left:1532px;top:552px;width:1px;height:177px;background:#e8e8e8;"></div>
<div class="br" style="left:1057.2px;top:598.0px;width:38.6px;height:123.6px"></div>
<div class="br" style="left:1098.6px;top:607.0px;width:38.6px;height:114.6px"></div>
<div class="br" style="left:1140.0px;top:589.8px;width:38.6px;height:131.8px"></div>
<div class="br" style="left:1181.4px;top:586.3px;width:38.6px;height:135.3px"></div>
<div class="br" style="left:1222.8px;top:573.0px;width:38.6px;height:148.6px"></div>
<div class="br" style="left:1264.2px;top:569.4px;width:38.6px;height:152.2px"></div>
<div class="br" style="left:1305.6px;top:559.3px;width:38.6px;height:162.3px"></div>
<div class="br" style="left:1347.0px;top:563.7px;width:38.6px;height:157.9px"></div>
<div class="br" style="left:1388.4px;top:576.0px;width:38.6px;height:145.6px"></div>
<div class="br" style="left:1429.8px;top:569.8px;width:38.6px;height:151.8px"></div>
<div class="br" style="left:1471.2px;top:578.0px;width:38.6px;height:143.6px"></div>
<div class="br" style="left:1512.6px;top:580.3px;width:38.6px;height:141.3px"></div>
<div class="a" style="left:1033px;top:551px;width:1px;height:179px;background:#222;"></div>
<div class="a" style="left:1033px;top:729px;width:543px;height:1px;background:#222;"></div>
<div class="a" style="left:1029px;top:727px;width:4px;height:1px;background:#222;"></div>
<div class="a" style="left:1029px;top:722px;width:4px;height:1px;background:#222;"></div>
<div class="a" style="left:1029px;top:716px;width:4px;height:1px;background:#222;"></div>
<div class="a" style="left:1029px;top:711px;width:4px;height:1px;background:#222;"></div>
<div class="a" style="left:1029px;top:706px;width:4px;height:1px;background:#222;"></div>
<div class="a" style="left:1029px;top:701px;width:4px;height:1px;background:#222;"></div>
<div class="a" style="left:1029px;top:695px;width:4px;height:1px;background:#222;"></div>
<div class="a" style="left:1029px;top:690px;width:4px;height:1px;background:#222;"></div>
<div class="a" style="left:1029px;top:685px;width:4px;height:1px;background:#222;"></div>
<div class="a" style="left:1029px;top:680px;width:4px;height:1px;background:#222;"></div>
<div class="a" style="left:1029px;top:674px;width:4px;height:1px;background:#222;"></div>
<div class="a" style="left:1029px;top:669px;width:4px;height:1px;background:#222;"></div>
<div class="a" style="left:1029px;top:664px;width:4px;height:1px;background:#222;"></div>
<div class="a" style="left:1029px;top:659px;width:4px;height:1px;background:#222;"></div>
<div class="a" style="left:1029px;top:653px;width:4px;height:1px;background:#222;"></div>
<div class="a" style="left:1029px;top:648px;width:4px;height:1px;background:#222;"></div>
<div class="a" style="left:1029px;top:643px;width:4px;height:1px;background:#222;"></div>
<div class="a" style="left:1029px;top:638px;width:4px;height:1px;background:#222;"></div>
<div class="a" style="left:1029px;top:632px;width:4px;height:1px;background:#222;"></div>
<div class="a" style="left:1029px;top:627px;width:4px;height:1px;background:#222;"></div>
<div class="a" style="left:1029px;top:622px;width:4px;height:1px;background:#222;"></div>
<div class="a" style="left:1029px;top:617px;width:4px;height:1px;background:#222;"></div>
<div class="a" style="left:1029px;top:611px;width:4px;height:1px;background:#222;"></div>
<div class="a" style="left:1029px;top:606px;width:4px;height:1px;background:#222;"></div>
<div class="a" style="left:1029px;top:601px;width:4px;height:1px;background:#222;"></div>
<div class="a" style="left:1029px;top:596px;width:4px;height:1px;background:#222;"></div>
<div class="a" style="left:1029px;top:590px;width:4px;height:1px;background:#222;"></div>
<div class="a" style="left:1029px;top:585px;width:4px;height:1px;background:#222;"></div>
<div class="a" style="left:1029px;top:580px;width:4px;height:1px;background:#222;"></div>
<div class="a" style="left:1029px;top:575px;width:4px;height:1px;background:#222;"></div>
<div class="a" style="left:1029px;top:569px;width:4px;height:1px;background:#222;"></div>
<div class="a" style="left:1029px;top:564px;width:4px;height:1px;background:#222;"></div>
<div class="a" style="left:1029px;top:559px;width:4px;height:1px;background:#222;"></div>
<div class="a" style="left:1029px;top:553px;width:4px;height:1px;background:#222;"></div>
<div class="a" style="left:1027px;top:722px;width:8px;height:1px;background:#222;"></div>
<div class="yl" style="left:962px;top:715.6px">0.000e+0</div>
<div class="a" style="left:1027px;top:695px;width:8px;height:1px;background:#222;"></div>
<div class="yl" style="left:962px;top:689.3px">2.000e+4</div>
<div class="a" style="left:1027px;top:669px;width:8px;height:1px;background:#222;"></div>
<div class="yl" style="left:962px;top:663.1px">4.000e+4</div>
<div class="a" style="left:1027px;top:643px;width:8px;height:1px;background:#222;"></div>
<div class="yl" style="left:962px;top:636.8px">6.000e+4</div>
<div class="a" style="left:1027px;top:617px;width:8px;height:1px;background:#222;"></div>
<div class="yl" style="left:962px;top:610.5px">8.000e+4</div>
<div class="a" style="left:1027px;top:590px;width:8px;height:1px;background:#222;"></div>
<div class="yl" style="left:962px;top:584.3px">1.000e+5</div>
<div class="a" style="left:1027px;top:564px;width:8px;height:1px;background:#222;"></div>
<div class="yl" style="left:962px;top:558.0px">1.200e+5</div>
<div class="a" style="left:1035px;top:730px;width:1px;height:4px;background:#222;"></div>
<div class="a" style="left:1052px;top:730px;width:1px;height:4px;background:#222;"></div>
<div class="a" style="left:1068px;top:730px;width:1px;height:4px;background:#222;"></div>
<div class="a" style="left:1085px;top:730px;width:1px;height:4px;background:#222;"></div>
<div class="a" style="left:1101px;top:730px;width:1px;height:4px;background:#222;"></div>
<div class="a" style="left:1118px;top:730px;width:1px;height:4px;background:#222;"></div>
<div class="a" style="left:1134px;top:730px;width:1px;height:4px;background:#222;"></div>
<div class="a" style="left:1151px;top:730px;width:1px;height:4px;background:#222;"></div>
<div class="a" style="left:1168px;top:730px;width:1px;height:4px;background:#222;"></div>
<div class="a" style="left:1184px;top:730px;width:1px;height:4px;background:#222;"></div>
<div class="a" style="left:1201px;top:730px;width:1px;height:4px;background:#222;"></div>
<div class="a" style="left:1217px;top:730px;width:1px;height:4px;background:#222;"></div>
<div class="a" style="left:1234px;top:730px;width:1px;height:4px;background:#222;"></div>
<div class="a" style="left:1250px;top:730px;width:1px;height:4px;background:#222;"></div>
<div class="a" style="left:1267px;top:730px;width:1px;height:4px;background:#222;"></div>
<div class="a" style="left:1284px;top:730px;width:1px;height:4px;background:#222;"></div>
<div class="a" style="left:1300px;top:730px;width:1px;height:4px;background:#222;"></div>
<div class="a" style="left:1317px;top:730px;width:1px;height:4px;background:#222;"></div>
<div class="a" style="left:1333px;top:730px;width:1px;height:4px;background:#222;"></div>
<div class="a" style="left:1350px;top:730px;width:1px;height:4px;background:#222;"></div>
<div class="a" style="left:1366px;top:730px;width:1px;height:4px;background:#222;"></div>
<div class="a" style="left:1383px;top:730px;width:1px;height:4px;background:#222;"></div>
<div class="a" style="left:1399px;top:730px;width:1px;height:4px;background:#222;"></div>
<div class="a" style="left:1416px;top:730px;width:1px;height:4px;background:#222;"></div>
<div class="a" style="left:1433px;top:730px;width:1px;height:4px;background:#222;"></div>
<div class="a" style="left:1449px;top:730px;width:1px;height:4px;background:#222;"></div>
<div class="a" style="left:1466px;top:730px;width:1px;height:4px;background:#222;"></div>
<div class="a" style="left:1482px;top:730px;width:1px;height:4px;background:#222;"></div>
<div class="a" style="left:1499px;top:730px;width:1px;height:4px;background:#222;"></div>
<div class="a" style="left:1515px;top:730px;width:1px;height:4px;background:#222;"></div>
<div class="a" style="left:1532px;top:730px;width:1px;height:4px;background:#222;"></div>
<div class="a" style="left:1548px;top:730px;width:1px;height:4px;background:#222;"></div>
<div class="a" style="left:1565px;top:730px;width:1px;height:4px;background:#222;"></div>
<div class="a" style="left:1035px;top:727px;width:1px;height:8px;background:#222;"></div>
<div class="xl" style="left:995.1px;top:739px">0</div>
<div class="a" style="left:1118px;top:727px;width:1px;height:8px;background:#222;"></div>
<div class="xl" style="left:1077.9px;top:739px">2</div>
<div class="a" style="left:1201px;top:727px;width:1px;height:8px;background:#222;"></div>
<div class="xl" style="left:1160.7px;top:739px">4</div>
<div class="a" style="left:1284px;top:727px;width:1px;height:8px;background:#222;"></div>
<div class="xl" style="left:1243.5px;top:739px">6</div>
<div class="a" style="left:1366px;top:727px;width:1px;height:8px;background:#222;"></div>
<div class="xl" style="left:1326.3px;top:739px">8</div>
<div class="a" style="left:1449px;top:727px;width:1px;height:8px;background:#222;"></div>
<div class="xl" style="left:1409.1px;top:739px">10</div>
<div class="a" style="left:1532px;top:727px;width:1px;height:8px;background:#222;"></div>
<div class="xl" style="left:1491.9px;top:739px">12</div>
<svg class="a" style="left:1578px;top:550px" width="22" height="22" viewBox="-11 -11 22 22"><path d="M-3.67 -8.87 A9.6 9.6 0 0 1 4.02 -8.72 L1.76 -3.81 A4.2 4.2 0 0 0 -1.61 -3.88Z" fill="#36b54a"/><path d="M3.67 -8.87 A9.6 9.6 0 0 1 9.01 -3.32 L3.94 -1.45 A4.2 4.2 0 0 0 1.61 -3.88Z" fill="#16b0a8"/><path d="M8.87 -3.67 A9.6 9.6 0 0 1 8.72 4.02 L3.81 1.76 A4.2 4.2 0 0 0 3.88 -1.61Z" fill="#2a9ad6"/><path d="M8.87 3.67 A9.6 9.6 0 0 1 3.32 9.01 L1.45 3.94 A4.2 4.2 0 0 0 3.88 1.61Z" fill="#7d4f9e"/><path d="M3.67 8.87 A9.6 9.6 0 0 1 -4.02 8.72 L-1.76 3.81 A4.2 4.2 0 0 0 1.61 3.88Z" fill="#e0135e"/><path d="M-3.67 8.87 A9.6 9.6 0 0 1 -9.01 3.32 L-3.94 1.45 A4.2 4.2 0 0 0 -1.61 3.88Z" fill="#f25b24"/><path d="M-8.87 3.67 A9.6 9.6 0 0 1 -8.72 -4.02 L-3.81 -1.76 A4.2 4.2 0 0 0 -3.88 1.61Z" fill="#f7981d"/><path d="M-8.87 -3.67 A9.6 9.6 0 0 1 -3.32 -9.01 L-1.45 -3.94 A4.2 4.2 0 0 0 -3.88 -1.61Z" fill="#a6c63c"/></svg><svg class="a" style="left:1580px;top:582px" width="18" height="18" viewBox="0 0 18 18"><g fill="none" stroke="#a096a8" stroke-width="1.6"><path d="M9 2V16M2 9H16"/></g><g fill="#a096a8"><path d="M9 0.5L12 4H6Z"/><path d="M9 17.5L12 14H6Z"/><path d="M0.5 9L4 6V12Z"/><path d="M17.5 9L14 6V12Z"/></g></svg><svg class="a" style="left:1580px;top:613px" width="18" height="18" viewBox="0 0 18 18"><g fill="none" stroke="#a096a8" stroke-width="1.4"><rect x="1.5" y="4" width="5" height="10" rx="2.5"/><path d="M2.5 9H5.5"/><circle cx="12.5" cy="6.5" r="4"/><path d="M10.5 10L8.5 16"/></g></svg><svg class="a" style="left:1580px;top:644px" width="18" height="18" viewBox="0 0 18 18"><g fill="none" stroke="#a096a8" stroke-width="1.6"><path d="M3 8A6 6 0 0 1 14.5 6"/><path d="M15 10A6 6 0 0 1 3.5 12"/></g><g fill="#a096a8"><path d="M16.5 3V8.5H11Z"/><path d="M1.5 15V9.5H7Z"/></g></svg><div class="a" style="left:1575px;top:576px;width:1px;height:61px;background:#4a90c8"></div><div class="a" style="left:1583px;top:606px;width:12px;height:1px;background:#e0e0e0"></div><div class="a" style="left:1583px;top:637px;width:12px;height:1px;background:#e0e0e0"></div>
<div class="t" style="left:982px;top:756px;font-size:13px;font-weight:bold;line-height:15px;color:#111">1 .. 12</div>
<div class="a" style="left:982px;top:779px;width:612px;height:10px;background:#e3e3e3;border:1px solid #d3d3d3;border-radius:3px"></div>
<div class="a" style="left:976px;top:775px;width:14px;height:18px;background:#fafafa;border:1px solid #d9d9d9;border-radius:3px"></div>
<div class="a" style="left:1588px;top:775px;width:14px;height:18px;background:#fafafa;border:1px solid #d9d9d9;border-radius:3px"></div>
<div class="a" style="left:1653px;top:206px;width:13px;height:296px;background:#f6f6f6;"></div>
<div class="a" style="left:1654px;top:219px;width:11px;height:269px;background:#bdbdbd;"></div>
<div class="a" style="left:1655px;top:210px;border-left:4.5px solid transparent;border-right:4.5px solid transparent;border-bottom:5px solid #8a7a9a"></div>
<div class="a" style="left:1655px;top:493px;border-left:4.5px solid transparent;border-right:4.5px solid transparent;border-top:5px solid #5a4a6a"></div>
<div class="a" style="left:1653px;top:508px;width:13px;height:293px;background:#f6f6f6;"></div>
<div class="a" style="left:1654px;top:519px;width:11px;height:269px;background:#bdbdbd;"></div>
<div class="a" style="left:1655px;top:512px;border-left:4.5px solid transparent;border-right:4.5px solid transparent;border-bottom:5px solid #8a7a9a"></div>
<div class="a" style="left:1655px;top:792px;border-left:4.5px solid transparent;border-right:4.5px solid transparent;border-top:5px solid #5a4a6a"></div>
<div class="a" style="left:953px;top:507px;width:13px;height:296px;background:#f6f6f6;"></div>
<div class="a" style="left:954px;top:519px;width:11px;height:271px;background:#bdbdbd;"></div>
<div class="a" style="left:955px;top:511px;border-left:4.5px solid transparent;border-right:4.5px solid transparent;border-bottom:5px solid #8a7a9a"></div>
<div class="a" style="left:955px;top:794px;border-left:4.5px solid transparent;border-right:4.5px solid transparent;border-top:5px solid #5a4a6a"></div>
<div class="t m" style="left:62px;top:826px;font-size:12px;line-height:15px;color:#9e9e9e">[ ]:</div>
<div class="a" style="left:98px;top:819px;width:1574px;height:29px;background:#f2f2f2;border:1px solid #dcdcdc"></div>
</body></html>
